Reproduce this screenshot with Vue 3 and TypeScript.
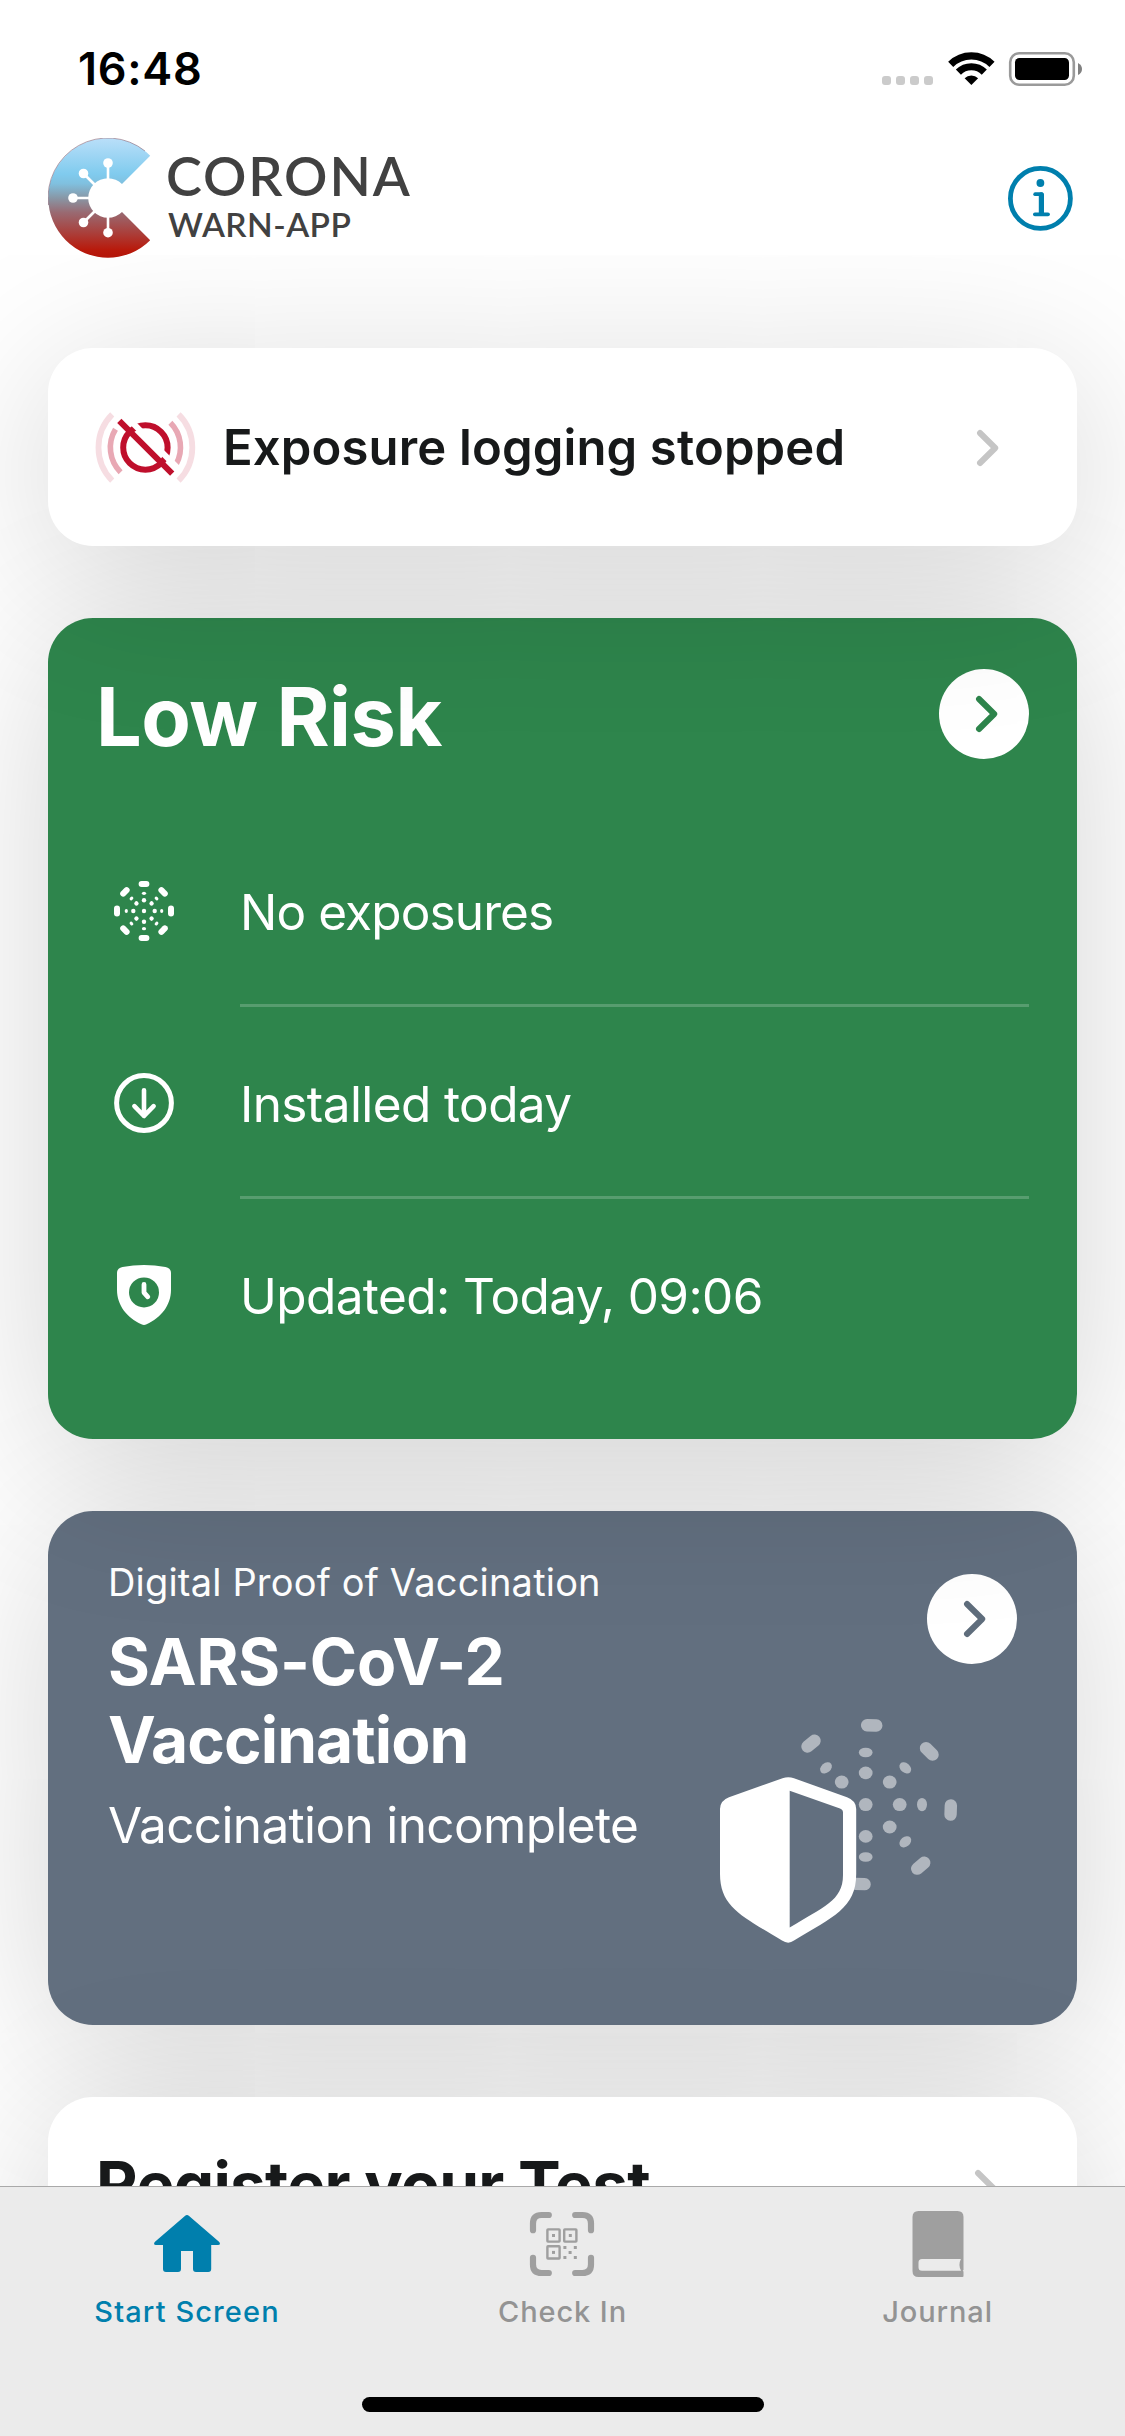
<script setup lang="ts">
interface RiskRow {
  icon: 'burst' | 'download' | 'shield'
  text: string
  spacing: string
}

const rows: RiskRow[] = [
  { icon: 'burst', text: 'No exposures', spacing: '-0.88px' },
  { icon: 'download', text: 'Installed today', spacing: '-0.6px' },
  { icon: 'shield', text: 'Updated: Today, 09:06', spacing: '-0.6px' },
]

const spokes = [0, 45, 90, 135, 180, 225, 270, 315]
const virusSpikes = [
  { x: 108, y: 163 },
  { x: 83.5, y: 173.5 },
  { x: 73, y: 198 },
  { x: 83.5, y: 222.5 },
  { x: 108, y: 232.7 },
]

// Rounded bars of the outer ring: centre and rotation
const bars = [
  { x: 871.7, y: 1725.4, r: 2 },
  { x: 929.3, y: 1751.4, r: 45 },
  { x: 950.7, y: 1810, r: 92 },
  { x: 920.7, y: 1865.7, r: -40 },
  { x: 860, y: 1884, r: 2 },
  { x: 811, y: 1743.6, r: -40 },
]
// Inner dots: centre, radii and rotation
const dots = [
  { x: 865.7, y: 1804.6, a: 6.9, b: 6.5, r: 0 },
  { x: 899.7, y: 1804.6, a: 6.9, b: 6.5, r: 0 },
  { x: 865.7, y: 1772.9, a: 6.9, b: 6.3, r: 0 },
  { x: 865.7, y: 1836.4, a: 6.9, b: 6.3, r: 0 },
  { x: 889.7, y: 1782.1, a: 6.9, b: 6.5, r: 0 },
  { x: 841.7, y: 1782.1, a: 6.9, b: 6.5, r: 0 },
  { x: 889.7, y: 1827, a: 6.9, b: 6.5, r: 0 },
  { x: 865.7, y: 1752.5, a: 6.9, b: 4.8, r: 0 },
  { x: 865.7, y: 1857, a: 6.9, b: 4.8, r: 0 },
  { x: 922, y: 1804.6, a: 5, b: 6.7, r: 0 },
  { x: 905.3, y: 1767.9, a: 6.6, b: 4.8, r: 40 },
  { x: 826, y: 1767.9, a: 6.6, b: 4.8, r: -40 },
  { x: 905.3, y: 1841.8, a: 6.6, b: 4.8, r: -40 },
]
</script>

<template>
  <div class="screen">
    <div class="status">
      <span class="time">16:48</span>
      <svg class="indicators" viewBox="880 50 204 38" width="204" height="38">
        <g fill="#cbcbcb">
          <rect v-for="i in 4" :key="i" :x="868 + i * 14" y="76" width="9" height="9" rx="3" />
        </g>
        <g fill="none" stroke="#000" stroke-width="7.2">
          <path d="M950.7 64.4 A29.2 29.2 0 0 1 992 64.4" />
          <path d="M958.4 72.1 A18.3 18.3 0 0 1 984.3 72.1" />
        </g>
        <path d="M971.35 85 L964.6 78.2 A9.6 9.6 0 0 1 978.1 78.2 Z" />
        <rect x="1010.2" y="53.2" width="63.6" height="31.6" rx="9" fill="none" stroke="#9a9a9a" stroke-width="2.6" />
        <rect x="1015" y="58" width="54" height="22" rx="4.5" />
        <path d="M1078 63 Q1082 65 1082 69 Q1082 73 1078 75 Z" fill="#808080" />
      </svg>
    </div>

    <header class="header">
      <div class="logo">
        <svg viewBox="48 138 104 120" width="104" height="120">
          <defs>
            <linearGradient id="logo-fill" x1="0" y1="138" x2="0" y2="258" gradientUnits="userSpaceOnUse">
              <stop offset="0" stop-color="#badff9" />
              <stop offset="0.3" stop-color="#80cbee" />
              <stop offset="0.38" stop-color="#80c0df" />
              <stop offset="0.5" stop-color="#8897a6" />
              <stop offset="0.62" stop-color="#996a72" />
              <stop offset="0.8" stop-color="#ab3d38" />
              <stop offset="0.93" stop-color="#b81a0c" />
              <stop offset="1" stop-color="#b31408" />
            </linearGradient>
          </defs>
          <path
            d="M150.2 155.8 A59.7 59.7 0 1 0 150.2 240.2 L122 212 A19.8 19.8 0 1 1 122 184 Z"
            fill="url(#logo-fill)"
          />
          <path d="M48.5 205 A59.7 59.7 0 0 1 145 151" fill="none" stroke="#6b4055" stroke-opacity="0.6" stroke-width="0.8" />
          <circle cx="108" cy="198" r="18" fill="#fff" />
          <g v-for="(s, i) in virusSpikes" :key="i">
            <line :x1="s.x" :y1="s.y" x2="108" y2="198" stroke="#fff" stroke-width="2.6" />
            <circle :cx="s.x" :cy="s.y" r="4.8" fill="#fff" />
          </g>
        </svg>
        <div class="wordmark">
          <span class="word-top">CORONA</span>
          <span class="word-bottom">WARN-APP</span>
        </div>
      </div>
      <svg viewBox="1007 165 67 67" width="67" height="67">
        <circle cx="1040.4" cy="198.4" r="30" fill="none" stroke="#007fad" stroke-width="4.8" />
        <circle cx="1040.4" cy="183" r="3.9" fill="#007fad" />
        <g fill="none" stroke="#007fad" stroke-linecap="round" stroke-linejoin="round">
          <path d="M1035.2 194.2 H1041.6" stroke-width="3.8" />
          <path d="M1041.4 194.9 V213" stroke-width="5.2" />
          <path d="M1034.9 214.3 H1048" stroke-width="3.8" />
        </g>
      </svg>
    </header>

    <main class="cards">
      <section class="card logging">
        <svg viewBox="95 413 102 72" width="102" height="72">
          <g fill="none" stroke="#f6dde2" stroke-width="5.8">
            <path d="M112.2 415.4 A46.8 46.8 0 0 0 112.2 481.6" />
            <path d="M178.6 415.4 A46.8 46.8 0 0 1 178.6 481.6" />
          </g>
          <g fill="none" stroke="#e8a8b4" stroke-width="5.6">
            <path d="M115.5 430.3 A34.9 34.9 0 0 0 120.6 473.2" />
            <path d="M170.4 423.8 A34.9 34.9 0 0 1 176.1 465.3" />
          </g>
          <circle cx="145.4" cy="448.5" r="22.2" fill="none" stroke="#bf0f2c" stroke-width="6" />
          <path d="M124.8 416.2 L177.5 468.9" stroke="#fff" stroke-width="6" />
          <path d="M119.3 421.8 L172.2 474.6" stroke="#bf0f2c" stroke-width="6" />
        </svg>
        <span class="logging-text">Exposure logging stopped</span>
        <svg class="chevron" viewBox="0 0 24 38" width="24" height="38">
          <path d="M4 4 L19.2 19 L4 34" />
        </svg>
      </section>

      <section class="card risk">
        <div class="risk-head">
          <h1>Low Risk</h1>
          <span class="round">
            <svg class="chevron" viewBox="0 0 24 38" width="24" height="38">
              <path d="M4 4 L19.2 19 L4 34" />
            </svg>
          </span>
        </div>
        <div v-for="row in rows" :key="row.icon" class="risk-row">
          <svg v-if="row.icon === 'burst'" class="row-icon" viewBox="-30 -30 60 60" width="60" height="60">
            <g fill="#fff">
              <circle r="2.2" />
              <g v-for="a in spokes" :key="a" :transform="`rotate(${a})`">
                <rect x="-5.4" y="-30" width="10.8" height="6" rx="3" />
                <ellipse cy="-17.7" rx="2.1" ry="1.6" />
                <circle cy="-10.7" r="2.2" />
              </g>
            </g>
          </svg>
          <svg v-else-if="row.icon === 'download'" class="row-icon" viewBox="-30 -30 60 60" width="60" height="60">
            <g fill="none" stroke="#fff" stroke-linecap="round" stroke-linejoin="round">
              <circle r="27.4" stroke-width="5" />
              <path d="M0 -12.8 V13 M-9.6 3.2 L0 13 L9.6 3.2" stroke-width="4.6" />
            </g>
          </svg>
          <svg v-else class="row-icon" viewBox="-30 -30 60 60" width="60" height="60">
            <path
              fill="#fff"
              d="M-21.5 -28 Q0 -32 21.5 -28 Q27 -27 27 -22 V-5 C27 10 17 23 2.6 29.2 Q0 30.6 -2.6 29.2 C-17 23 -27 10 -27 -5 V-22 Q-27 -27 -21.5 -28 Z"
            />
            <circle cy="-2.6" r="15" fill="#2e854c" />
            <path d="M0 -10.6 V-2.4 L3.8 1.8" fill="none" stroke="#fff" stroke-width="4.8" stroke-linecap="round" stroke-linejoin="round" />
          </svg>
          <span class="row-text" :style="{ letterSpacing: row.spacing }">{{ row.text }}</span>
        </div>
      </section>

      <section class="card proof">
        <div class="proof-text">
          <span class="proof-label">Digital Proof of Vaccination</span>
          <h2><span class="line-a">SARS-CoV-2</span><span class="line-b">Vaccination</span></h2>
          <span class="proof-state">Vaccination incomplete</span>
        </div>
        <div class="proof-side">
          <span class="round">
            <svg class="chevron" viewBox="0 0 24 38" width="24" height="38">
              <path d="M4 4 L19.2 19 L4 34" />
            </svg>
          </span>
          <svg class="illustration" viewBox="717 1717 300 230" width="300" height="230">
            <g fill="#b0b6be">
              <rect
                v-for="(b, i) in bars"
                :key="`b${i}`"
                x="-10.8"
                y="-6.2"
                width="21.6"
                height="12.4"
                rx="6.2"
                :transform="`translate(${b.x} ${b.y}) rotate(${b.r})`"
              />
              <ellipse
                v-for="(d, i) in dots"
                :key="`d${i}`"
                :rx="d.a"
                :ry="d.b"
                :transform="`translate(${d.x} ${d.y}) rotate(${d.r})`"
              />
            </g>
            <path
              fill="#fff"
              d="M782.5 1778.3 Q788.3 1776.2 794 1778.3 L847 1797.2 Q856.2 1800.6 856.2 1809 V1874 C856.2 1908 833 1917 794 1940.6 Q788.3 1944.8 782 1940.6 C744 1917 720 1908 720 1874 V1809 Q720 1800.6 729 1797.2 Z"
            />
            <path fill="#626f7f" d="M789.7 1790.7 L840 1808.5 Q843 1809.6 843 1812.6 V1875 C843 1901 823 1907 789.7 1927.6 Z" />
          </svg>
        </div>
      </section>

      <section class="card register">
        <span class="register-text">Register your Test</span>
        <svg class="chevron" viewBox="0 0 24 38" width="24" height="38">
          <path d="M4 4 L19.2 19 L4 34" />
        </svg>
      </section>
    </main>

    <nav class="tabbar">
      <div class="tabs">
        <div class="tab active">
          <svg class="tab-icon" viewBox="154 2211 66 66" width="66" height="66">
            <path
              fill="#007fad"
              d="M184.9 2215.9 Q187 2214 189.1 2215.9 L219 2241.7 Q221.3 2244.6 218 2245 H211.2 V2269 Q211.2 2272 208.2 2272 H196 Q193 2272 193 2269 V2251 H181 V2269 Q181 2272 178 2272 H166 Q163 2272 163 2269 V2245 H156 Q152.7 2244.6 155 2241.7 Z"
            />
          </svg>
          <span class="tab-start">Start Screen</span>
        </div>
        <div class="tab">
          <svg class="tab-icon" viewBox="529 2211 66 66" width="66" height="66">
            <g fill="none" stroke="#9f9f9f" stroke-width="6.2" stroke-linecap="round">
              <path d="M533 2230.2 V2223.5 Q533 2215 541.5 2215 H548.8" />
              <path d="M575.2 2215 H582.5 Q591 2215 591 2223.5 V2230.2" />
              <path d="M533 2257.8 V2264.5 Q533 2273 541.5 2273 H548.8" />
              <path d="M575.2 2273 H582.5 Q591 2273 591 2264.5 V2257.8" />
            </g>
            <g fill="none" stroke="#9f9f9f" stroke-width="2.4">
              <rect x="547.4" y="2229.4" width="12.2" height="12.2" rx="0.6" />
              <rect x="564.2" y="2229.4" width="12.2" height="12.2" rx="0.6" />
              <rect x="547.4" y="2246.3" width="12.2" height="12.2" rx="0.6" />
            </g>
            <g fill="#9f9f9f">
              <rect x="552" y="2234" width="3" height="3" />
              <rect x="568.8" y="2234" width="3" height="3" />
              <rect x="552" y="2250.9" width="3" height="3" />
              <rect x="563.4" y="2246" width="3" height="3" />
              <rect x="573.8" y="2246" width="3" height="3" />
              <rect x="568.6" y="2251" width="3" height="3" />
              <rect x="563.4" y="2256" width="3" height="3" />
              <rect x="573.8" y="2256" width="3" height="3" />
            </g>
          </svg>
          <span class="tab-checkin">Check In</span>
        </div>
        <div class="tab">
          <svg viewBox="904.5 2211 66 66" width="66" height="66">
            <path
              fill="#9f9f9f"
              fill-rule="evenodd"
              d="M918 2211 H957 Q963 2211 963 2217 V2270 Q961.5 2270.6 963 2271.4 V2276 Q963 2277 962 2277 H918 Q912 2277 912 2271 V2217 Q912 2211 918 2211 Z M921.5 2259 Q918 2259 918 2262.5 V2267.3 Q918 2270.8 921.5 2270.8 H960.6 Q957.4 2265 960.4 2259 Z"
            />
          </svg>
          <span class="tab-journal">Journal</span>
        </div>
      </div>
      <div class="home-indicator"></div>
    </nav>
  </div>
</template>

<style>
body {
  margin: 0;
  background: #fff;
}
</style>

<style scoped>
.screen {
  position: relative;
  width: 1125px;
  height: 2436px;
  overflow: hidden;
  background: #fff;
  font-family: Inter, "Liberation Sans", sans-serif;
  color: #17191a;
}
svg {
  display: block;
  flex: none;
}
h1,
h2 {
  margin: 0;
}
span {
  white-space: nowrap;
}

.status {
  position: relative;
  z-index: 5;
  display: flex;
  justify-content: space-between;
  align-items: center;
  box-sizing: border-box;
  height: 132px;
  padding: 6px 41px 0 78px;
}
.time {
  font-size: 45px;
  line-height: 60px;
  font-weight: 600;
  letter-spacing: 0.72px;
  color: #000;
}

.header {
  position: relative;
  z-index: 5;
  display: flex;
  justify-content: space-between;
  align-items: center;
  height: 132px;
  padding: 0 51px 0 48px;
}
.logo {
  display: flex;
  align-items: center;
  gap: 14px;
}
.wordmark {
  display: flex;
  flex-direction: column;
  padding-bottom: 10px;
  font-family: Lato, "Open Sans", sans-serif;
  font-weight: 600;
  color: #414141;
}
.word-top {
  font-size: 54px;
  line-height: 62px;
  letter-spacing: 1.9px;
}
.word-bottom {
  margin-left: 2px;
  font-size: 33.5px;
  line-height: 34px;
  letter-spacing: 0.45px;
}

.cards {
  display: flex;
  flex-direction: column;
  gap: 72px;
  padding: 84px 48px 0;
}
.card {
  position: relative;
  box-sizing: border-box;
  border-radius: 45px;
  box-shadow: 0 27px 165px rgba(0, 0, 0, 0.172);
}

.chevron path {
  fill: none;
  stroke: #c5c5c5;
  stroke-width: 6;
  stroke-linecap: round;
  stroke-linejoin: round;
}

.logging {
  z-index: 3;
  display: flex;
  align-items: center;
  height: 198px;
  padding: 2px 77px 0 47px;
  background: #fff;
}
.logging-text {
  flex: 1;
  margin-left: 26px;
  font-size: 49px;
  line-height: 60px;
  font-weight: 600;
  letter-spacing: 0.15px;
}

.risk {
  z-index: 2;
  height: 821px;
  padding: 0 48px 48px;
  background: #2e854c;
  color: #fff;
}
.risk-head {
  display: flex;
  justify-content: space-between;
  align-items: center;
  height: 197px;
}
.risk-head h1 {
  font-size: 81px;
  line-height: 100px;
  font-weight: 700;
  letter-spacing: -0.5px;
}
.round {
  display: flex;
  align-items: center;
  justify-content: center;
  flex: none;
  box-sizing: border-box;
  width: 90px;
  height: 90px;
  padding-left: 6px;
  border-radius: 50%;
  background: #fff;
}
.risk-head .round {
  margin-bottom: 5px;
}
.risk .chevron path {
  stroke: #2e854c;
}
.risk-row {
  display: flex;
  align-items: center;
  height: 192px;
}
.row-icon {
  margin: 0 66px 0 18px;
}
.row-text {
  flex: 1;
  height: 192px;
  font-size: 49.5px;
  line-height: 194px;
  font-weight: 400;
}
.risk-row:not(:last-child) .row-text {
  box-shadow: inset 0 -3px 0 rgba(255, 255, 255, 0.2);
}

.proof {
  z-index: 1;
  display: flex;
  justify-content: space-between;
  height: 514px;
  padding: 47px 60px 0;
  background: #626f7f;
  color: #fff;
}
.proof-text {
  display: flex;
  flex-direction: column;
}
.proof-label {
  font-size: 38px;
  line-height: 48px;
  letter-spacing: 0.18px;
}
.proof h2 {
  display: flex;
  flex-direction: column;
  margin: 17px 0 16px;
  font-size: 64px;
  line-height: 78px;
  font-weight: 700;
}
.line-a {
  letter-spacing: -0.16px;
}
.line-b {
  letter-spacing: -0.93px;
}
.proof-state {
  font-size: 49.5px;
  line-height: 60px;
  letter-spacing: -0.64px;
}
.proof-side {
  display: flex;
  flex-direction: column;
  align-items: flex-end;
  padding-top: 16px;
}
.proof .chevron path {
  stroke: #5f6d7c;
}
.illustration {
  margin-top: 53px;
}

.register {
  z-index: 2;
  display: flex;
  align-items: flex-start;
  justify-content: space-between;
  height: 480px;
  padding: 49px 79px 0 48px;
  background: #fff;
}
.register-text {
  font-size: 64px;
  line-height: 78px;
  font-weight: 700;
  letter-spacing: -0.78px;
}
.register .chevron {
  margin-top: 23px;
}

.tabbar {
  position: absolute;
  z-index: 10;
  left: 0;
  right: 0;
  bottom: 0;
  display: flex;
  flex-direction: column;
  align-items: center;
  justify-content: space-between;
  box-sizing: border-box;
  height: 250px;
  padding: 24px 0;
  border-top: 1px solid #a9a9a9;
  background: #ebebeb;
}
.tabs {
  display: flex;
  width: 100%;
}
.tab {
  flex: 1;
  display: flex;
  flex-direction: column;
  align-items: center;
  gap: 16px;
  font-size: 29px;
  line-height: 38px;
  font-weight: 500;
  color: #939393;
}
.tab.active {
  color: #007fad;
}
.tab-icon {
  margin-right: 2px;
}
.tab-start {
  margin-right: 1px;
  letter-spacing: 1.1px;
}
.tab-checkin {
  letter-spacing: 0.9px;
}
.tab-journal {
  letter-spacing: 0.89px;
}
.home-indicator {
  width: 402px;
  height: 15px;
  border-radius: 8px;
  background: #000;
}
</style>
